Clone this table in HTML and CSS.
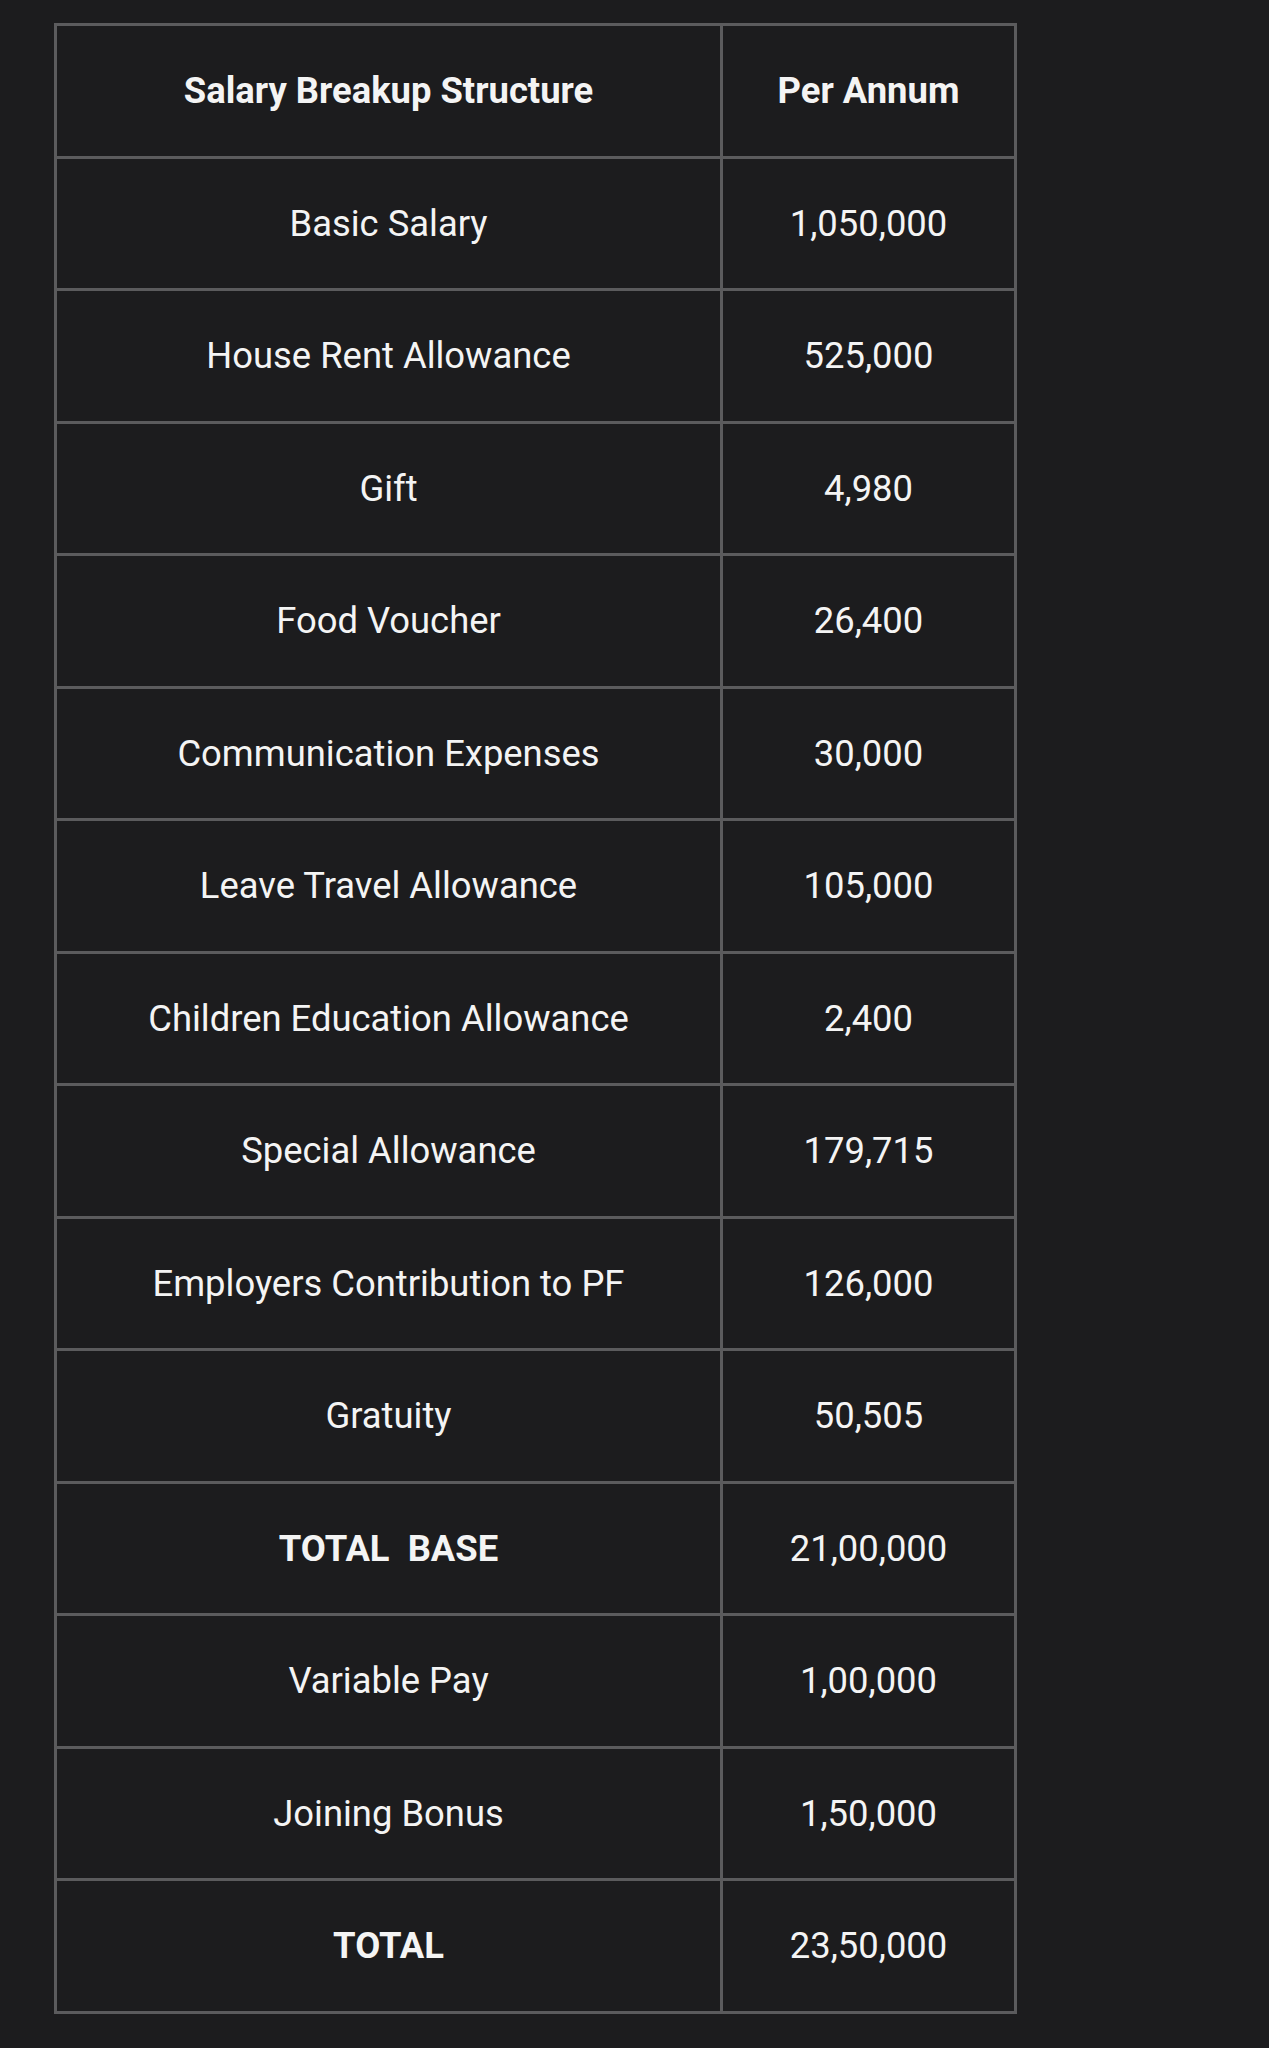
FILE: index.html
```html
<!DOCTYPE html>
<html>
<head>
<meta charset="utf-8">
<link rel="stylesheet" href="styles.css">
</head>
<body>
<table class="salary">
<thead>
<tr><th>Salary Breakup Structure</th><th>Per Annum</th></tr>
</thead>
<tbody>
<tr><td>Basic Salary</td><td>1,050,000</td></tr>
<tr><td>House Rent Allowance</td><td>525,000</td></tr>
<tr><td>Gift</td><td>4,980</td></tr>
<tr><td>Food Voucher</td><td>26,400</td></tr>
<tr><td>Communication Expenses</td><td>30,000</td></tr>
<tr><td>Leave Travel Allowance</td><td>105,000</td></tr>
<tr><td>Children Education Allowance</td><td>2,400</td></tr>
<tr><td>Special Allowance</td><td>179,715</td></tr>
<tr><td>Employers Contribution to PF</td><td>126,000</td></tr>
<tr><td>Gratuity</td><td>50,505</td></tr>
<tr><td class="strong">TOTAL&nbsp; BASE</td><td>21,00,000</td></tr>
<tr><td>Variable Pay</td><td>1,00,000</td></tr>
<tr><td>Joining Bonus</td><td>1,50,000</td></tr>
<tr><td class="strong">TOTAL</td><td>23,50,000</td></tr>
</tbody>
</table>
</body>
</html>
```
FILE: styles.css
```css
html, body {
  margin: 0;
  background: #1c1c1e;
}
body {
  padding: 23px 0 0 54px;
  font-family: Roboto, "Liberation Sans", sans-serif;
  color: #f4f4f4;
}
.salary {
  border-collapse: collapse;
  width: 963px;
  table-layout: fixed;
}
.salary th, .salary td {
  border: 3px solid #5b5b5d;
  height: 129.5px;
  padding: 0;
  text-align: center;
  vertical-align: middle;
  font-size: 36.4px;
}
.salary th {
  font-weight: 700;
}
.salary th:first-child, .salary td:first-child {
  width: 663px;
}
.salary .strong {
  font-weight: 700;
}
```
